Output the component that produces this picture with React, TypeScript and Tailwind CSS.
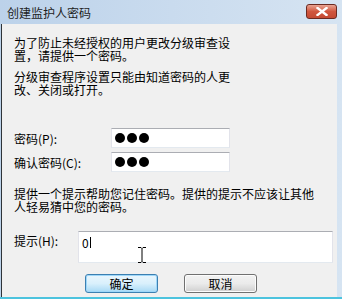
import React from "react";

const font = { fontFamily: '"Noto Sans CJK SC", "Noto Sans", sans-serif' };

function Lines({ lines, className = "" }: { lines: string[]; className?: string }) {
  return (
    <div className={className}>
      {lines.map((l) => (
        <div key={l} className="h-[13px] leading-[13px] whitespace-nowrap">
          {l}
        </div>
      ))}
    </div>
  );
}

function Dots() {
  return (
    <div className="flex items-center gap-[2px] h-full pl-[3px]">
      <span className="w-[10px] h-[10px] rounded-full bg-black"></span>
      <span className="w-[10px] h-[10px] rounded-full bg-black"></span>
      <span className="w-[10px] h-[10px] rounded-full bg-black"></span>
    </div>
  );
}

function Field({ label }: { label: string }) {
  return (
    <div className="flex items-center h-[20px]">
      <span className="w-[97px]">{label}</span>
      <div className="w-[119px] h-[20px] bg-white border border-[#e2e3ea] border-t-[#abadb3] border-b-[#e3e9ef]">
        <Dots />
      </div>
    </div>
  );
}

export default function App() {
  return (
    <div
      className="relative w-[342px] h-[299px] overflow-hidden flex flex-col bg-linear-to-r from-[#bcd2ea] to-[#d6e4f2] text-[12px] leading-[13px] text-black"
      style={font}
    >
      {/* Title bar */}
      <div className="h-[24px] flex items-center justify-between pl-[7px] pr-[5px] shrink-0">
        <span className="text-[12px] text-[#1e1e1e] pt-[1px]">创建监护人密码</span>
        <div className="w-[31px] h-[15px] -mt-[2px] rounded-[3px] border border-[#6b2a21] bg-linear-to-b from-[#e8a493] via-[#d0563e] to-[#c44a33] flex items-center justify-center">
          <svg width="12" height="9" viewBox="0 0 12 9">
            <path d="M1.5 1 L10.5 8 M10.5 1 L1.5 8" stroke="#ffffff" strokeWidth="2.4" strokeLinecap="square" />
          </svg>
        </div>
      </div>

      {/* Client area */}
      <div className="flex-1 ml-[1px] mr-[5px] border-l border-[#2e3338] bg-[#f0f0f0] pl-[12px] pt-[12px]">
        <Lines lines={["为了防止未经授权的用户更改分级审查设", "置，请提供一个密码。"]} />
        <Lines className="mt-[8px]" lines={["分级审查程序设置只能由知道密码的人更", "改、关闭或打开。"]} />

        <div className="mt-[32px]">
          <Field label="密码(P):" />
        </div>
        <div className="mt-[4px]">
          <Field label="确认密码(C):" />
        </div>

        <Lines
          className="mt-[15px]"
          lines={["提供一个提示帮助您记住密码。提供的提示不应该让其他", "人轻易猜中您的密码。"]}
        />

        <div className="mt-[18px] flex">
          <span className="w-[64px] pt-[3px]">提示(H):</span>
          <div className="relative w-[255px] h-[32px] bg-white border border-[#e2e3ea] border-t-[#abadb3] border-b-[#e3e9ef] pl-[3px] pt-[4px] flex items-start">
            <span>0</span>
            <span className="ml-[1px] mt-[1px] w-[1px] h-[11px] bg-black"></span>
          </div>
        </div>

        <div className="mt-[11px] flex pl-[71px] gap-[26px]">
          <button className="w-[73px] h-[19px] rounded-[3px] border border-[#3c7fb1] bg-linear-to-b from-[#eaf6fd] via-[#d9f0fc] to-[#a7d9f5] shadow-[inset_0_0_0_1px_#9ed7f9] text-[12px] leading-[13px]">
            确定
          </button>
          <button className="w-[73px] h-[19px] rounded-[3px] border border-[#707070] bg-linear-to-b from-[#f2f2f2] via-[#ebebeb] to-[#cfcfcf] shadow-[inset_0_0_0_1px_#fcfcfc] text-[12px] leading-[13px]">
            取消
          </button>
        </div>
      </div>
      <div className="h-[2px] shrink-0 bg-[#4cc3de]"></div>

      {/* Mouse I-beam cursor */}
      <svg className="absolute left-[137px] top-[247px]" width="10" height="16" viewBox="0 0 10 16">
        <path d="M1 0.5 H4 L5 1.5 L6 0.5 H9 M5 1.5 V14.5 M1 15.5 H4 L5 14.5 L6 15.5 H9" stroke="#000" strokeWidth="1" fill="none" />
      </svg>
    </div>
  );
}
